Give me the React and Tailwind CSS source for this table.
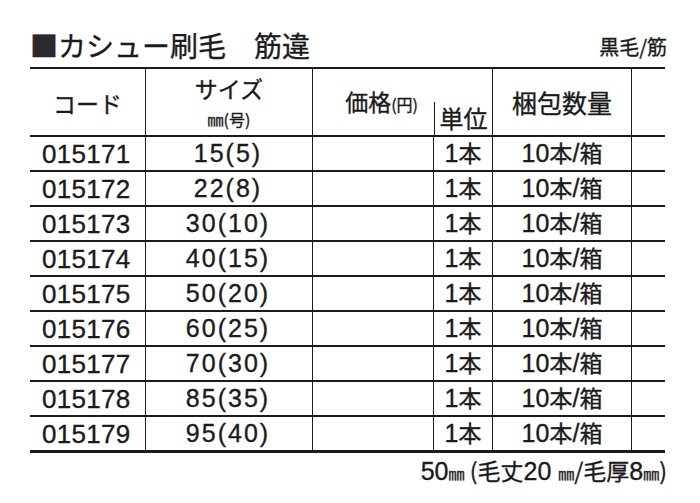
import React from "react";

const rows = [
  ["015171", "15(5)"],
  ["015172", "22(8)"],
  ["015173", "30(10)"],
  ["015174", "40(15)"],
  ["015175", "50(20)"],
  ["015176", "60(25)"],
  ["015177", "70(30)"],
  ["015178", "85(35)"],
  ["015179", "95(40)"],
];

const grid = "grid grid-cols-[116px_167px_121px_59px_139px_33px]";
const jp = { fontFamily: '"Noto Sans CJK JP", sans-serif' };

export default function App() {
  return (
    <div
      className="w-[700px] h-[503px] bg-white text-[#1b1b1b] overflow-hidden [-webkit-text-stroke:0.35px_#1b1b1b]"
      style={{ fontFamily: '"Liberation Sans", "Noto Sans CJK JP", sans-serif' }}
    >
      <div className="h-[67px] flex justify-between items-end pl-[30px] pr-[33px] pb-[8px]">
        <div className="text-[28px] leading-none whitespace-pre" style={jp}>
          <span className="text-[#2a2a2e]">■</span>カシュー刷毛　筋違
        </div>
        <div className="text-[20px] leading-none mb-[2px]" style={jp}>
          黒毛/筋
        </div>
      </div>

      <div className="ml-[30px] w-[635px]">
        <div className={`${grid} h-[70px] border-t-2 border-b-2 border-[#1b1b1b]`}>
          <div className="border-r-[1.5px] border-[#1b1b1b] flex items-center justify-center pt-[2px]">
            <span className="text-[23px] leading-none" style={jp}>コード</span>
          </div>
          <div className="border-r-[1.5px] border-[#1b1b1b] flex flex-col items-center justify-center">
            <span className="text-[23px] leading-none" style={jp}>サイズ</span>
            <span className="text-[16px] leading-none mt-[11px]" style={jp}>㎜(号)</span>
          </div>
          <div className="flex items-start justify-end pt-[21px] pr-[16px]">
            <span className="leading-none whitespace-nowrap" style={jp}>
              <span className="text-[23px]">価格</span>
              <span className="text-[16px]">(円)</span>
            </span>
          </div>
          <div className="border-r-[1.5px] border-[#1b1b1b] flex flex-col justify-end">
            <div className="h-[33px] border-l-[1.5px] border-[#1b1b1b] flex items-start justify-center pt-[4px]">
              <span className="text-[24px] leading-none" style={jp}>単位</span>
            </div>
          </div>
          <div className="border-r-[1.5px] border-[#1b1b1b] flex items-center justify-center pt-[1px]">
            <span className="text-[25px] leading-none" style={jp}>梱包数量</span>
          </div>
          <div />
        </div>

        {rows.map(([code, size], i) => (
          <div
            key={code}
            className={`${grid} ${i === rows.length - 1 ? "h-[36px] border-b-[3px]" : "h-[35px] border-b-2"} border-[#1b1b1b]`}
          >
            <div className="border-r-[1.5px] border-[#1b1b1b] flex items-center pl-[12px]">
              <span className="text-[26px] leading-none tracking-[0.3px]">{code}</span>
            </div>
            <div className="border-r-[1.5px] border-[#1b1b1b] flex items-center justify-center pr-[2px]">
              <span className="text-[25px] leading-none tracking-[2px]">{size}</span>
            </div>
            <div className="border-r-[1.5px] border-[#1b1b1b]" />
            <div className="border-r-[1.5px] border-[#1b1b1b] flex items-center justify-center">
              <span className="text-[25px] leading-none">1<span className="text-[23px]" style={jp}>本</span></span>
            </div>
            <div className="border-r-[1.5px] border-[#1b1b1b] flex items-center justify-center">
              <span className="text-[25px] leading-none whitespace-nowrap">
                10<span className="text-[23px]" style={jp}>本</span>/<span className="text-[23px]" style={jp}>箱</span>
              </span>
            </div>
            <div />
          </div>
        ))}

        <div className="flex justify-end pt-[6px] -mr-[2px]">
          <span className="text-[25px] leading-none whitespace-pre">
            50<span className="text-[16px]" style={jp}>㎜</span><span className="text-[23px]" style={jp}> (毛丈</span>20 <span className="text-[16px]" style={jp}>㎜</span><span className="text-[23px]" style={jp}>/毛厚</span>8<span className="text-[16px]" style={jp}>㎜</span><span className="text-[23px]" style={jp}>)</span>
          </span>
        </div>
      </div>
    </div>
  );
}
